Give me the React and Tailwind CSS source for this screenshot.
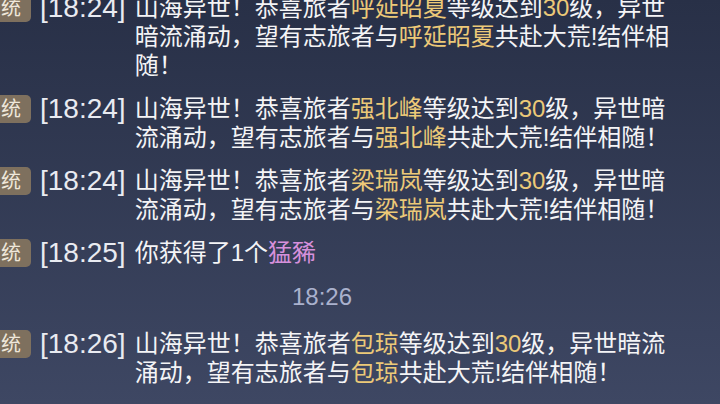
import React from 'react';

const gold = 'text-[#ecc978]';

const messages = [
  {
    time: '18:24',
    parts: [
      ['山海异世！恭喜旅者'],
      ['呼延昭夏', gold],
      ['等级达到'],
      ['30', gold],
      ['级，异世暗流涌动，望有志旅者与'],
      ['呼延昭夏', gold],
      ['共赴大荒!结伴相随！'],
    ],
  },
  {
    time: '18:24',
    parts: [
      ['山海异世！恭喜旅者'],
      ['强北峰', gold],
      ['等级达到'],
      ['30', gold],
      ['级，异世暗流涌动，望有志旅者与'],
      ['强北峰', gold],
      ['共赴大荒!结伴相随！'],
    ],
  },
  {
    time: '18:24',
    parts: [
      ['山海异世！恭喜旅者'],
      ['梁瑞岚', gold],
      ['等级达到'],
      ['30', gold],
      ['级，异世暗流涌动，望有志旅者与'],
      ['梁瑞岚', gold],
      ['共赴大荒!结伴相随！'],
    ],
  },
  {
    time: '18:25',
    parts: [['你获得了1个'], ['猛豨', 'text-[#d690dc]']],
  },
];

const last = {
  time: '18:26',
  parts: [
    ['山海异世！恭喜旅者'],
    ['包琼', gold],
    ['等级达到'],
    ['30', gold],
    ['级，异世暗流涌动，望有志旅者与'],
    ['包琼', gold],
    ['共赴大荒!结伴相随！'],
  ],
};

function Row({ msg, className = '' }) {
  return (
    <div className={`flex items-start ${className}`}>
      <div className="-ml-[29px] mt-[1px] h-[28px] shrink-0 rounded-[5px] bg-[#7e705e] px-[10px] text-[20px] leading-[28px] text-[#efe7da]">
        系统
      </div>
      <div className="ml-[9px] shrink-0 text-[28px] leading-[29px] text-[#e9ebf1] font-['Liberation_Sans',sans-serif]">
        [{msg.time}]
      </div>
      <div className="ml-[9px] w-[548px] text-[24px] leading-[29px] text-[#f4f4f6]">
        {msg.parts.map(([t, c], i) => (
          <span key={i} className={c}>
            {t}
          </span>
        ))}
      </div>
    </div>
  );
}

export default function App() {
  return (
    <div className="h-[404px] w-[720px] overflow-hidden bg-gradient-to-b from-[#283047] to-[#3e4763] font-['Liberation_Sans','Noto_Sans_CJK_SC',sans-serif]">
      <div className="-mt-[7px] flex flex-col gap-[14px]">
        {messages.map((m, i) => (
          <Row key={i} msg={m} />
        ))}
      </div>
      <div className="mt-[15px] flex justify-center pr-[76px] text-[24px] leading-[29px] text-[#aab1cd]">
        18:26
      </div>
      <Row msg={last} className="mt-[18px]" />
    </div>
  );
}
